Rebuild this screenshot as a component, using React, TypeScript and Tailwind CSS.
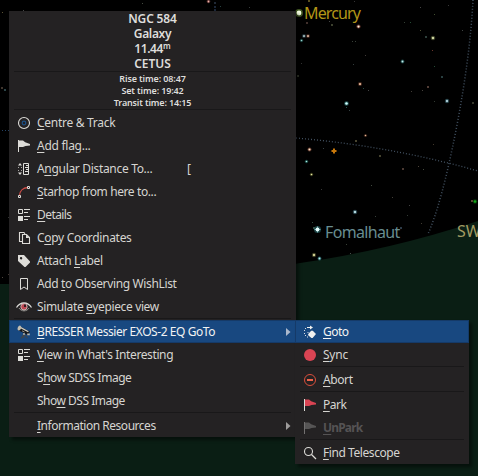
import { useLayoutEffect, useRef, useState, type ReactNode } from "react";

/** Text whose tracking is adjusted so that it spans the given width. */
function Fit({ text, w, mark }: { text: string; w: number; mark?: number }) {
  const ref = useRef<HTMLSpanElement>(null);
  const [spacing, setSpacing] = useState(0);
  useLayoutEffect(() => {
    if (ref.current) setSpacing((w - ref.current.offsetWidth) / text.length);
  }, [w, text]);
  return (
    <span ref={ref} className="inline-block whitespace-pre" style={{ letterSpacing: `${spacing}px` }}>
      {mark === undefined ? (
        text
      ) : (
        <>
          {text.slice(0, mark)}
          <span className="underline decoration-1 underline-offset-2">{text[mark]}</span>
          {text.slice(mark + 1)}
        </>
      )}
    </span>
  );
}

const Svg = ({ children }: { children: ReactNode }) => (
  <svg width="16" height="16" viewBox="0 0 16 16" fill="none" className="shrink-0 overflow-visible">
    {children}
  </svg>
);

const L = "#dddcd8";

const icons: Record<string, ReactNode> = {
  centre: (
    <Svg>
      <circle cx="8" cy="8" r="5.5" stroke={L} strokeWidth="1.1" />
      <circle cx="8" cy="8" r="1.8" stroke="#1d4f85" strokeWidth="1.2" />
    </Svg>
  ),
  flag: (
    <Svg>
      <path d="M2 2h1v12H2z" fill={L} />
      <path d="M3 2.5h4l2.2 1.8L14 6v1.5L9.5 8 7 9H3z" fill={L} />
    </Svg>
  ),
  redflag: (
    <Svg>
      <path d="M2 2h1v12H2z" fill={L} />
      <path d="M3 2.5h4l2.2 1.8L14 6v1.5L9.5 8 7 9H3z" fill="#da4453" />
    </Svg>
  ),
  greyflag: (
    <Svg>
      <path d="M2 2h1v12H2z" fill="#727070" />
      <path d="M3 2.5h4l2.2 1.8L14 6v1.5L9.5 8 7 9H3z" fill="#565555" />
    </Svg>
  ),
  angular: (
    <Svg>
      <path d="M7.5 2.5h5v11h-5z" stroke={L} />
      <path d="M10 4.5h2.5M9 6.5h3.5M10 8.5h2.5M9 10.5h3.5" stroke={L} />
      <path d="M4 2l2 2.5H2zM4 14l2-2.5H2z" fill={L} />
      <path d="M2 6.5h1M5 6.5h1M2 9.5h1M5 9.5h1" stroke="#aaa8a5" />
    </Svg>
  ),
  hop: (
    <Svg>
      <path d="M3.5 11.5C3.7 7 7 3.8 11.5 3.5" stroke="#c94b45" strokeWidth="1.3" />
      <path d="M2.5 11.5h2v2h-2zM11.5 2.5h2v2h-2z" stroke={L} />
    </Svg>
  ),
  details: (
    <Svg>
      <path d="M2.5 2.5h4v4h-4z" stroke={L} />
      <path d="M2 9h5v5H2z" fill={L} />
      <path d="M8 2.5h6M8 5.5h4M8 9.5h6M8 12.5h4" stroke={L} />
    </Svg>
  ),
  copy: (
    <Svg>
      <path d="M6 11.5H3.5v-9H8L9 4M6.5 4.5h4l3 3v6h-7z" stroke={L} strokeWidth="1.1" />
      <path d="M10 4.5v3.5h3.5z" fill={L} />
    </Svg>
  ),
  label: (
    <Svg>
      <path fillRule="evenodd" d="M2 2h6l6 6.5v1L9.5 14h-1L2 8zM5 4a1.2 1.2 0 1 0 .1 2.4A1.2 1.2 0 0 0 5 4z" fill={L} />
    </Svg>
  ),
  bookmark: (
    <Svg>
      <path d="M4.5 2.5h7v11L8 11l-3.5 2.5z" stroke={L} />
    </Svg>
  ),
  eye: (
    <Svg>
      <path d="M.5 8.5C4.5 2.5 11.5 2.5 15.5 8.5" stroke={L} strokeWidth="1.3" />
      <path d="M3 9c2 3.8 8 3.8 10 0" stroke="#96938f" />
      <circle cx="8" cy="7.8" r="3.2" fill="#bd4752" stroke={L} strokeWidth=".7" />
      <path d="M8 8V5.5h2V8z" fill="#301c22" />
    </Svg>
  ),
  scope: (
    <Svg>
      <path d="M7.5 10v4M8 10.5 5 14.5M8 10.5l3.5 3.5" stroke="#3c454e" strokeWidth="1.3" />
      <path d="M3.2 2 13.8 7.6 12 11.2 2.4 6.2z" fill="#15181c" />
      <path d="M4.8 3.6 12.4 7.8" stroke="#cfcbc0" strokeWidth="1.3" />
      <path d="M6 6.8 8.5 8" stroke="#8f8c86" />
      <ellipse cx="3.4" cy="4" rx="1.7" ry="2.6" transform="rotate(25 3.4 4)" fill="#c2bdb0" />
      <path d="M11.2 9.6h2.6v1.6h-2.6z" fill="#b9b7b0" />
      <circle cx="8" cy="10" r="1.1" fill="#a9aaa6" />
    </Svg>
  ),
  goto: (
    <Svg>
      <path d="M9.2 6.8h1.6L14 10l-3.4 3.9H9.4L6.2 11.2V10z" fill="#f1f1ef" />
      <path d="M5 3.5h4.5" stroke="#f1f1ef" />
      <path d="M8 1.5 11 3.5 8 5.5z" fill="#f1f1ef" />
      <path d="M3 4.5h1M2 6.5h1M2 9.5h1M3 11.5h1M5 13h1M5.500 8.500h1" stroke="#d5dce5" />
    </Svg>
  ),
  sync: (
    <Svg>
      <circle cx="8" cy="8" r="6" fill="#da4453" />
    </Svg>
  ),
  abort: (
    <Svg>
      <circle cx="8" cy="8" r="5.5" stroke="#da4f3c" />
      <path d="M5 8h6" stroke="#ef634b" strokeWidth="2" />
    </Svg>
  ),
  find: (
    <Svg>
      <circle cx="6.5" cy="6.5" r="4" stroke={L} strokeWidth="1.1" />
      <path d="m9.5 9.5 4.5 4.5" stroke={L} strokeWidth="1.2" />
    </Svg>
  ),
};

type Item = { text: string; w: number; mark?: number; icon?: string; key?: string; arrow?: boolean; on?: boolean; off?: boolean };

const menu: (Item | null)[] = [
  { text: "Centre & Track", w: 78, mark: 0, icon: "centre" },
  { text: "Add flag...", w: 54, mark: 0, icon: "flag" },
  { text: "Angular Distance To...", w: 115, mark: 1, icon: "angular", key: "[" },
  { text: "Starhop from here to...", w: 119, mark: 0, icon: "hop" },
  { text: "Details", w: 35, mark: 0, icon: "details" },
  { text: "Copy Coordinates", w: 95, mark: 1, icon: "copy" },
  { text: "Attach Label", w: 66, mark: 7, icon: "label" },
  { text: "Add to Observing WishList", w: 140, mark: 4, icon: "bookmark" },
  { text: "Simulate eyepiece view", w: 122, mark: 9, icon: "eye" },
  null,
  { text: "BRESSER Messier EXOS-2 EQ GoTo", w: 178, mark: 0, icon: "scope", arrow: true, on: true },
  { text: "View in What's Interesting", w: 136, mark: 0, icon: "details" },
  { text: "Show SDSS Image", w: 94, mark: 1 },
  { text: "Show DSS Image", w: 88, mark: 3 },
  null,
  { text: "Information Resources", w: 119, mark: 0, arrow: true },
];

const sub: (Item | null)[] = [
  { text: "Goto", w: 26, mark: 0, icon: "goto", on: true },
  { text: "Sync", w: 25, mark: 0, icon: "sync" },
  null,
  { text: "Abort", w: 30, mark: 0, icon: "abort" },
  null,
  { text: "Park", w: 23, mark: 0, icon: "redflag" },
  { text: "UnPark", w: 39, mark: 0, icon: "greyflag", off: true },
  null,
  { text: "Find Telescope", w: 77, mark: 0, icon: "find" },
];

const Separator = () => (
  <div className="h-[2px] px-[5px]">
    <div className="h-px bg-[#191819]" />
  </div>
);

function Row({ item }: { item: Item }) {
  const tone = item.on
    ? "bg-[#184880] text-[#f2f3f3] ring-1 ring-inset ring-[#153a68]"
    : item.off
      ? "text-[#555354] font-bold"
      : "text-[#d6d5d1]";
  return (
    <div className={`flex h-[23px] items-center pl-[7px] pr-[5px] ${tone}`}>
      <div className="flex w-[21px] shrink-0">{item.icon && icons[item.icon]}</div>
      <div className="flex flex-1 leading-[23px]">
        <div className="w-[150px] shrink-0">
          <Fit text={item.text} w={item.w} mark={item.mark} />
        </div>
        {item.key && <span>{item.key}</span>}
      </div>
      {item.arrow && (
        <svg width="5" height="8" viewBox="0 0 5 8">
          <path d="M0 0 4.5 4 0 8z" fill={item.on ? "#abb8cc" : "#9e9c9b"} />
        </svg>
      )}
    </div>
  );
}

const rows = (items: (Item | null)[]) => items.map((it, i) => (it ? <Row key={i} item={it} /> : <Separator key={i} />));

// x, y, size, colour
const specks: [number, number, number, string][] = [
  [142, 3, 1, "#454b40"], [2, 12, 1, "#5b5234"], [23, 10, 1, "#484848"], [1, 87, 2, "#40362e"], [4, 89, 2, "#2d4548"],
  [8, 217, 1, "#333"], [2, 277, 1, "#4d4740"], [8, 274, 1, "#443833"], [214, 2, 2, "#202936"], [214, 6, 2, "#1b2637"], [214, 9, 2, "#1b2637"],
  [220, 6, 1, "#26413f"], [249, 7, 1, "#343a3a"], [306, 22, 2, "#40302c"], [308, 0, 2, "#5a5020"], [297, 75, 2, "#303528"],
  [301, 63, 1, "#333"], [329, 21, 1, "#444"], [331, 24, 2, "#3c402e"], [354, 1, 1, "#333"], [352, 41, 1, "#384038"], [355, 41, 1, "#384038"],
  [365, 55, 1, "#403a38"], [353, 64, 1, "#333c3c"], [363, 88, 1, "#234541"], [368, 90, 1, "#444"], [346, 107, 1, "#254b49"], [349, 110, 1, "#384345"],
  [404, 22, 1, "#344035"], [410, 22, 1, "#234b34"], [420, 7, 1, "#444"], [448, 5, 1, "#383838"], [434, 14, 1, "#404e30"],
  [420, 30, 1, "#505032"], [425, 36, 2, "#2e403b"], [462, 30, 1, "#404443"], [432, 50, 1, "#6b352b"], [434, 66, 1, "#244c36"],
  [441, 76, 2, "#293f40"], [427, 86, 2, "#523d36"], [422, 90, 1, "#46413c"], [411, 91, 1, "#413d37"], [434, 101, 1, "#303a31"], [472, 102, 2, "#36382c"],
  [355, 140, 2, "#484530"], [379, 155, 2, "#45432f"], [402, 168, 2, "#4b3932"], [433, 144, 1, "#42382c"], [418, 166, 1, "#4d4439"], [423, 169, 1, "#454a3e"],
  [371, 185, 1, "#40493f"], [392, 197, 1, "#424039"], [321, 189, 1, "#383838"], [409, 205, 1, "#434343"], [407, 215, 1, "#323b35"], [375, 216, 1, "#37403a"],
  [312, 222, 1, "#30483e"], [313, 227, 2, "#365145"], [400, 227, 2, "#2d3b48"], [421, 223, 1, "#403b32"], [471, 200, 2, "#5e4637"],
  [346, 244, 1, "#384136"], [350, 253, 1, "#45504a"], [323, 148, 1, "#363f44"],
];

// x, y, core colour, glow colour, radius
const stars: [number, number, string, string, number][] = [
  [208.5, 1.5, "#f1b6aa", "#7f4143", 1.2], [358.5, 26.5, "#fff2dd", "#a55443", 1.5], [304, 36, "#a2b8ba", "#344f58", 1.5],
  [308, 36, "#d1ac97", "#5b3329", 1.5], [301.5, 40.5, "#9ddad7", "#23615d", 1.1], [433, 38, "#cdd4a1", "#5c6339", 1.7],
  [402.5, 61.5, "#c4f1f0", "#2d706f", 1.3], [360, 84, "#e3b898", "#71402e", 1.5], [346.5, 103.5, "#d2ffff", "#398a8a", 1.7],
  [447, 101, "#accad4", "#3a6a75", 1.6], [365.5, 135.5, "#e3b998", "#663a28", 1], [309.5, 149.5, "#ffe3c6", "#9a5945", 1.4],
  [306.5, 161.5, "#acece3", "#236e68", 1.1], [311.5, 174.5, "#e7e9a3", "#5d5f2c", 1.1], [355, 212, "#b2d8de", "#396170", 1.7],
  [314, 255, "#d0cc92", "#585b34", 1.6], [319.5, 258.5, "#b2f2ee", "#338188", 1.3], [475, 201.5, "#15a718", "#09590c", 1.7],
];

function Sky() {
  return (
    <svg className="absolute inset-0" width="478" height="476" viewBox="0 0 478 476">
      <rect width="478" height="476" fill="#000" />
      <g fill="none" stroke="#425161" strokeWidth="1" strokeDasharray="1 2">
        <path d="M473 0Q470 58 456 130T428 234" strokeWidth="1.5" />
        <path d="M296 138Q390 146 478 171" strokeWidth="1.3" />
        <path d="M2 130.5h7" stroke="#244365" />
      </g>
      <path d="M0 284H140Q240 275 300 263Q390 250 478 221V476H0z" fill="#0a1e14" />
      {specks.map(([x, y, s, c], i) => (
        <rect key={i} x={x} y={y} width={s} height={s} fill={c} />
      ))}
      {stars.map(([x, y, c, g, r], i) => (
        <g key={i}>
          <circle cx={x} cy={y} r={r + 0.6} fill={g} opacity=".6" />
          <circle cx={x} cy={y} r={r * 0.75} fill={c} />
        </g>
      ))}
      <circle cx="299" cy="13" r="4" fill="#59782f" opacity=".7" />
      <circle cx="299" cy="13" r="2.4" fill="#f6ffe3" />
      <circle cx="317.5" cy="229.5" r="3.5" fill="#285c60" opacity=".7" />
      <path d="M317.5 226.500v6M314.500 229.500h6" stroke="#69a8aa" />
      <circle cx="317.5" cy="229.5" r="1.9" fill="#e8ffff" />
      <path d="M334 148.5v5M331.5 151h5" stroke="#c8780b" strokeWidth="2" />
    </svg>
  );
}

export default function App() {
  return (
    <div className="relative h-[476px] w-[478px] overflow-hidden bg-black font-['Noto_Sans','Open_Sans',sans-serif] text-[12px]">
      <Sky />
      <div className="absolute left-[304px] top-[3px] text-[16px] leading-5 text-[#b29517]">
        <Fit text="Mercury" w={56} />
      </div>
      <div className="absolute left-[325px] top-[222px] text-[16px] leading-5 text-[#688d91]">
        <Fit text="Fomalhaut" w={75} />
      </div>
      <div className="absolute left-[457px] top-[221px] text-[16px] leading-5 text-[#a19b62]">
        <Fit text="SW" w={24} />
      </div>

      <div className="absolute left-[9px] top-[11px] h-[426px] w-[287px] bg-[#242223] shadow-[3px_3px_3px_rgba(0,0,0,0.45)]">
        <div className="flex h-[60px] flex-col items-center font-semibold text-[#dedddb]">
          <div className="h-[15px] leading-[15px]"><Fit text="NGC 584" w={49} /></div>
          <div className="h-[15px] leading-[15px]"><Fit text="Galaxy" w={37} /></div>
          <div className="flex h-[15px] leading-[15px]">
            <Fit text="11.44" w={29} />
            <span className="text-[8px] leading-[10px]">m</span>
          </div>
          <div className="h-[15px] leading-[15px]"><Fit text="CETUS" w={37} /></div>
        </div>
        <Separator />
        <div className="flex h-[36px] flex-col items-center text-[9px] font-semibold leading-[12px] text-[#dedddb]">
          <div className="h-3"><Fit text="Rise time: 08:47" w={66} /></div>
          <div className="h-3"><Fit text="Set time: 19:42" w={62} /></div>
          <div className="h-3"><Fit text="Transit time: 14:15" w={77} /></div>
        </div>
        <Separator />
        {rows(menu)}
      </div>

      <div className="absolute left-[295px] top-[320px] h-[144px] w-[174px] bg-[#242223] shadow-[3px_3px_3px_rgba(0,0,0,0.45)]">
        {rows(sub)}
      </div>
    </div>
  );
}
